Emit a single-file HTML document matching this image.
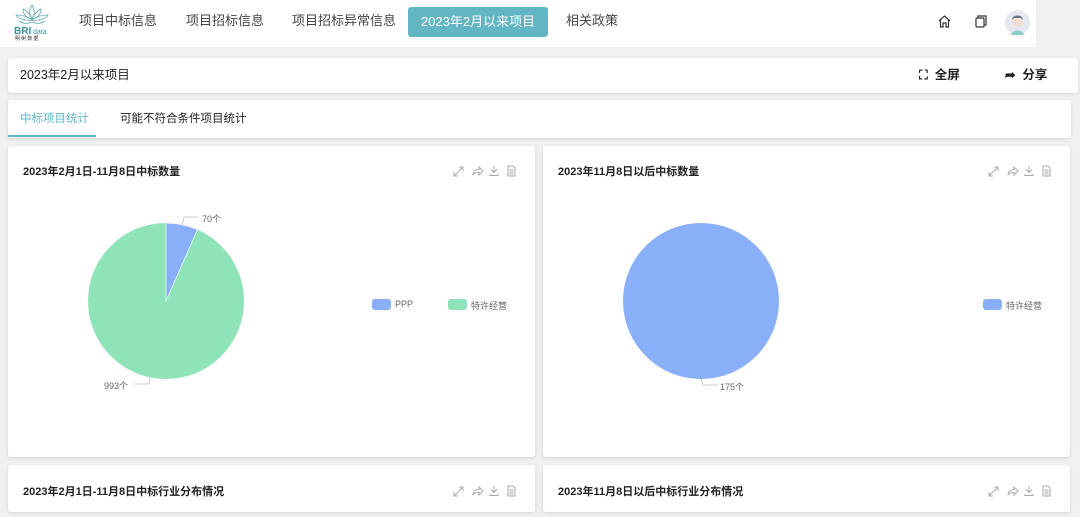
<!DOCTYPE html>
<html><head><meta charset="utf-8"><style>
*{margin:0;padding:0;box-sizing:border-box}
body{width:1080px;height:517px;overflow:hidden;background:#f0f0f0;font-family:"Liberation Sans","Noto Sans CJK SC",sans-serif;position:relative;color:#222}
.nav{position:absolute;left:0;top:0;width:1036px;height:47px;background:#fff}
.nav span{position:absolute;top:12px;font-size:13px;color:#444;line-height:18px}
.act{position:absolute;left:408px;top:7px;width:140px;height:30px;background:#62b6c4;border-radius:3px;color:#fff;font-size:13px;text-align:center;line-height:30px}
.card{position:absolute;background:#fff;border-radius:3px;box-shadow:0 1px 3px rgba(0,0,0,.12)}
.t{position:absolute;font-size:11px;font-weight:bold;color:#222}
.lbl{position:absolute;font-size:9px;color:#666}
</style></head><body>
<div class="nav">
<svg style="position:absolute;left:13px;top:3px" width="38" height="38" viewBox="0 0 38 38"><g fill="none" stroke="#5fa7b4" stroke-width="0.8"><path d="M19 2 C16 7 16 12 19 16 C22 12 22 7 19 2Z"/><path d="M10 6 C10 11 13 15 19 16 C17 11 14 8 10 6Z"/><path d="M28 6 C28 11 25 15 19 16 C21 11 24 8 28 6Z"/><path d="M3 12 C6 16 12 18 19 17 C14 13 9 12 3 12Z"/><path d="M35 12 C32 16 26 18 19 17 C24 13 29 12 35 12Z"/><path d="M6 18 C10 21 15 21 19 19 C23 21 28 21 32 18"/></g><text x="1" y="31" font-size="10" font-weight="bold" fill="#3d8fa0" font-family="Liberation Sans">BRI</text><text x="20" y="31" font-size="7" fill="#3d8fa0" font-family="Liberation Sans">data</text><text x="2" y="37" font-size="5" fill="#333" font-family="Noto Sans CJK SC">明 树 数 据</text></svg>
<span style="left:79px">项目中标信息</span>
<span style="left:186px">项目招标信息</span>
<span style="left:292px">项目招标异常信息</span>
<div class="act">2023年2月以来项目</div>
<span style="left:566px">相关政策</span>
<svg style="position:absolute;left:937px;top:14px" width="15" height="15" viewBox="0 0 15 15" fill="none" stroke="#333" stroke-width="1.2"><path d="M2 7 L7.5 2 L13 7 M3.5 6 V13 H6 V9 H9 V13 H11.5 V6"/></svg>
<svg style="position:absolute;left:974px;top:14px" width="14" height="14" viewBox="0 0 14 14" fill="none" stroke="#333" stroke-width="1.2"><rect x="2" y="4" width="8" height="9" rx="1"/><path d="M4 4 V2 H12 V11 H10"/></svg>
<svg style="position:absolute;left:1005px;top:10px" width="25" height="25" viewBox="0 0 25 25"><circle cx="12.5" cy="12.5" r="12.5" fill="#e6e8f0"/><path d="M6 25 C7 19 18 19 19 25Z" fill="#8ccfc4"/><circle cx="12.5" cy="12" r="5" fill="#f4ddd0"/><path d="M7 10 C7 4 18 4 18 10 L16 8 L9 8Z" fill="#6a7086"/></svg>
</div>
<div class="card" style="left:8px;top:58px;width:1070px;height:35px">
<div style="position:absolute;left:12px;top:9px;font-size:12.5px;line-height:16px">2023年2月以来项目</div>
<div style="position:absolute;left:911px;top:9px;font-size:12.5px;font-weight:bold;line-height:16px">⛶&nbsp; 全屏</div>
<div style="position:absolute;left:997px;top:9px;font-size:12.5px;font-weight:bold;line-height:16px">➦&nbsp; 分享</div>
</div>
<div class="card" style="left:8px;top:100px;width:1063px;height:38px">
<div style="position:absolute;left:12px;top:11px;font-size:11.5px;color:#62b6c4;line-height:16px">中标项目统计</div>
<div style="position:absolute;left:0;top:35px;width:88px;height:2px;background:#62b6c4"></div>
<div style="position:absolute;left:112px;top:11px;font-size:11.5px;color:#222;line-height:16px">可能不符合条件项目统计</div>
</div>
<div class="card" style="left:8px;top:146px;width:527px;height:311px"></div>
<div class="card" style="left:543px;top:146px;width:527px;height:311px"></div>
<div class="card" style="left:8px;top:465px;width:527px;height:47px"></div>
<div class="card" style="left:543px;top:465px;width:527px;height:47px"></div>
<div class="t" style="left:23px;top:163px">2023年2月1日-11月8日中标数量</div>
<div class="t" style="left:558px;top:163px">2023年11月8日以后中标数量</div>
<div class="t" style="left:23px;top:483px">2023年2月1日-11月8日中标行业分布情况</div>
<div class="t" style="left:558px;top:483px">2023年11月8日以后中标行业分布情况</div>
<svg style="position:absolute;left:0;top:0" width="1080" height="517">
<defs><g id="icons" fill="none" stroke="#aaa" stroke-width="1"><path d="M1 11 L10 2 M6 2 H10 V6 M1 7 V11 H5"/><path d="M20 10 C20 6 23 4.5 26 4.5 V2 L30 6 L26 10 V7.5 C23 7.5 21 8 20 10Z"/><path d="M41 1 V7 M38 4.5 L41 7.5 L44 4.5 M37 9 V10.5 H45 V9"/><path d="M55 1 H60 L62 3 V11 H55Z M56.5 5 H60.5 M56.5 7 H60.5 M56.5 9 H60.5"/></g></defs>
<use href="#icons" x="453" y="165"/><use href="#icons" x="988" y="165"/>
<use href="#icons" x="453" y="485"/><use href="#icons" x="988" y="485"/>
<circle cx="166" cy="301" r="78" fill="#8ee3b8"/>
<path d="M166 301 L166 223 A78 78 0 0 1 197.4 229.6 Z" fill="#88aff7" stroke="#fff" stroke-width="0.7"/>
<path d="M182 226 L184 217 H199" fill="none" stroke="#ccc"/>
<path d="M150 378 L149 384 H135" fill="none" stroke="#ccc"/>
<circle cx="701" cy="301" r="78" fill="#88aff7"/>
<path d="M701 379 L703 385 H718" fill="none" stroke="#ccc"/>
<rect x="372" y="299" width="19" height="11" rx="3" fill="#88aff7"/>
<rect x="448" y="299" width="19" height="11" rx="3" fill="#8ee3b8"/>
<rect x="983" y="299" width="19" height="11" rx="3" fill="#88aff7"/>
</svg>
<div class="lbl" style="left:202px;top:212px">70个</div>
<div class="lbl" style="left:104px;top:379px">993个</div>
<div class="lbl" style="left:720px;top:380px">175个</div>
<div class="lbl" style="left:395px;top:299px">PPP</div>
<div class="lbl" style="left:471px;top:299px">特许经营</div>
<div class="lbl" style="left:1006px;top:299px">特许经营</div>
</body></html>
